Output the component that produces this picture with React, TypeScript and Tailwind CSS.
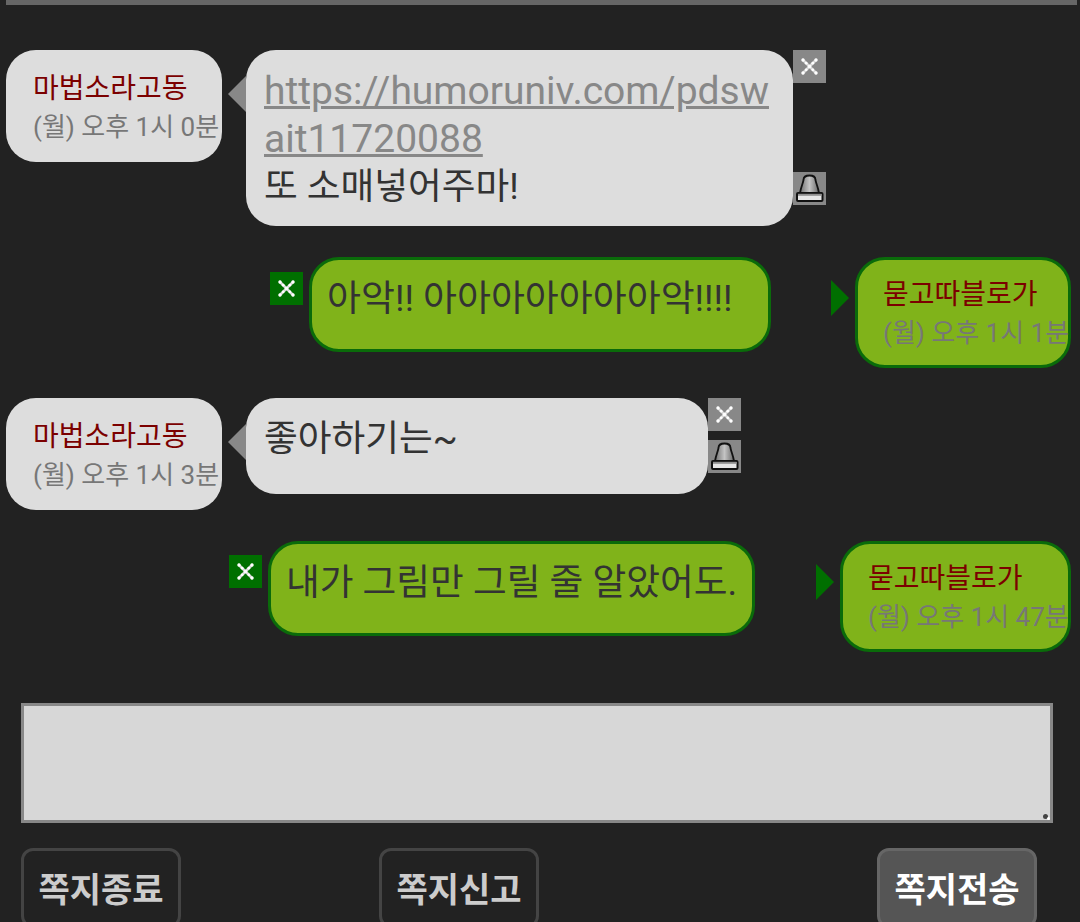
function XIcon({ className }: { className: string }) {
  return (
    <div className={`flex h-[33px] w-[33px] shrink-0 items-center justify-center ${className}`}>
      <svg width="33" height="33" viewBox="0 0 33 33">
        <path d="M10 10 L23 23 M23 10 L10 23" stroke="#d8d8d8" strokeWidth="2.6" strokeLinecap="round" />
        <g fill="#ffffff">
          <circle cx="10" cy="10" r="1.7" />
          <circle cx="13.2" cy="13.2" r="1.4" />
          <circle cx="16.5" cy="16.5" r="1.8" />
          <circle cx="19.8" cy="13.2" r="1.4" />
          <circle cx="23" cy="10" r="1.7" />
          <circle cx="13.2" cy="19.8" r="1.4" />
          <circle cx="19.8" cy="19.8" r="1.4" />
          <circle cx="10" cy="23" r="1.7" />
          <circle cx="23" cy="23" r="1.7" />
        </g>
      </svg>
    </div>
  );
}

function LockIcon() {
  return (
    <div className="h-[33px] w-[33px] shrink-0 bg-[#888888]">
      <svg width="33" height="33" viewBox="0 0 33 33">
        <defs>
          <linearGradient id="dome" x1="0" x2="1" y1="0" y2="0">
            <stop offset="0" stopColor="#6f6f6f" />
            <stop offset="0.5" stopColor="#c4c4c4" />
            <stop offset="1" stopColor="#666666" />
          </linearGradient>
        </defs>
        <path d="M10.5 8 C10.5 4.8 13 3.5 16.5 3.5 C20 3.5 22.5 4.8 22.5 8 C23.2 12 25 15 26 21 H7 C8 15 9.8 12 10.5 8 Z" fill="url(#dome)" stroke="#111111" strokeWidth="1.8" />
        <rect x="4" y="21" width="25.5" height="8" rx="1" fill="#e6e6e6" stroke="#111111" strokeWidth="2" />
        <rect x="5" y="21.8" width="23.5" height="2" fill="#8f8f8f" />
      </svg>
    </div>
  );
}

function GrayName({ date }: { date: string }) {
  return (
    <div className="h-[112px] w-[216px] shrink-0 whitespace-nowrap rounded-[30px] bg-[#dddddd] pl-[27px] pt-[20px]">
      <div className="text-[28px] leading-[38px] text-[#7b0000]">마법소라고동</div>
      <div className="text-[26px] leading-[38px] text-[#777777]">{date}</div>
    </div>
  );
}

function GreenName({ name, date, width }: { name: string; date: string; width: string }) {
  return (
    <div className={`h-[111px] shrink-0 whitespace-nowrap rounded-[30px] border-[3px] border-[#0a6b0a] bg-[#80b31a] pl-[25px] pt-[16px] ${width}`}>
      <div className="text-[28px] leading-[38px] text-[#7b0000]">{name}</div>
      <div className="text-[26px] leading-[38px] text-[#777777]">{date}</div>
    </div>
  );
}

function LeftArrow() {
  return <div className="ml-[6px] mt-[26px] h-0 w-0 shrink-0 border-y-[18px] border-r-[18px] border-y-transparent border-r-[#888888]" />;
}

function RightArrow({ className }: { className: string }) {
  return <div className={`mt-[23px] h-0 w-0 shrink-0 border-y-[18px] border-l-[18px] border-y-transparent border-l-[#006f00] ${className}`} />;
}

function GrayMsg({ children, width, height }: { children: React.ReactNode; width: string; height: string }) {
  return (
    <div className={`shrink-0 rounded-[30px] bg-[#dddddd] pl-[18px] pr-[22px] pt-[17px] text-[36.7px] leading-[48px] text-[#333333] ${width} ${height}`}>
      {children}
    </div>
  );
}

function GreenMsg({ children, className }: { children: React.ReactNode; className: string }) {
  return (
    <div className={`h-[95px] shrink-0 whitespace-nowrap rounded-[30px] border-[3px] border-[#0a6b0a] bg-[#80b31a] pt-[15px] leading-[47px] text-[#333333] ${className}`}>
      {children}
    </div>
  );
}

function Btn({ children, className }: { children: React.ReactNode; className: string }) {
  return (
    <div className={`flex h-[80px] w-[160px] shrink-0 justify-center rounded-[12px] border-[3px] pt-[16px] text-[34px] font-bold leading-[46px] ${className}`}>
      {children}
    </div>
  );
}

export default function App() {
  return (
    <div
      className="h-[922px] w-[1080px] overflow-hidden bg-[#222222]"
      style={{ fontFamily: 'Roboto, "Noto Sans CJK KR", sans-serif' }}
    >
      <div className="ml-[6px] h-[5px] w-[1071px] bg-[#666666]" />

      <div className="mt-[45px] flex items-start pl-[6px]">
        <GrayName date="(월) 오후 1시 0분" />
        <LeftArrow />
        <GrayMsg width="w-[547px]" height="h-[176px]">
          <a className="block break-all text-[39px] text-[#888888] underline">https://humoruniv.com/pdswait11720088</a>
          또 소매넣어주마!
        </GrayMsg>
        <div className="flex h-[155px] flex-col justify-between">
          <XIcon className="bg-[#888888]" />
          <LockIcon />
        </div>
      </div>

      <div className="mt-[31px] flex items-start justify-end pr-[9px]">
        <div className="mr-[6px] mt-[15px]">
          <XIcon className="bg-[#006f00]" />
        </div>
        <GreenMsg className="w-[462px] pl-[15px] text-[36.9px]">아악!! 아아아아아아아악!!!!</GreenMsg>
        <RightArrow className="ml-[60px] mr-[6px]" />
        <GreenName name="묻고따블로가" date="(월) 오후 1시 1분" width="w-[216px]" />
      </div>

      <div className="mt-[30px] flex items-start pl-[6px]">
        <GrayName date="(월) 오후 1시 3분" />
        <LeftArrow />
        <GrayMsg width="w-[462px]" height="h-[96px]">좋아하기는~</GrayMsg>
        <div className="flex h-[75px] flex-col justify-between">
          <XIcon className="bg-[#888888]" />
          <LockIcon />
        </div>
      </div>

      <div className="mt-[31px] flex items-start justify-end pr-[9px]">
        <div className="mr-[6px] mt-[14px]">
          <XIcon className="bg-[#006f00]" />
        </div>
        <GreenMsg className="w-[487px] pl-[15px] text-[36.7px]">내가 그림만 그릴 줄 알았어도.</GreenMsg>
        <RightArrow className="ml-[61px] mr-[6px]" />
        <GreenName name="묻고따블로가" date="(월) 오후 1시 47분" width="w-[231px]" />
      </div>

      <div className="relative ml-[21px] mt-[51px] h-[120px] w-[1032px] border-[3px] border-[#888888] bg-[#d7d7d7]">
        <div className="absolute bottom-[1px] right-[2px] h-[5px] w-[5px] rounded-full bg-[#444444]" />
        <div className="absolute bottom-0 right-0 h-[3px] w-[3px] rounded-full bg-white" />
      </div>

      <div className="mt-[25px] flex pl-[21px]">
        <Btn className="border-[#444444] text-[#cccccc]">쪽지종료</Btn>
        <Btn className="ml-[198px] border-[#444444] text-[#cccccc]">쪽지신고</Btn>
        <Btn className="ml-[338px] border-[#666666] bg-[#555555] text-white">쪽지전송</Btn>
      </div>
    </div>
  );
}
